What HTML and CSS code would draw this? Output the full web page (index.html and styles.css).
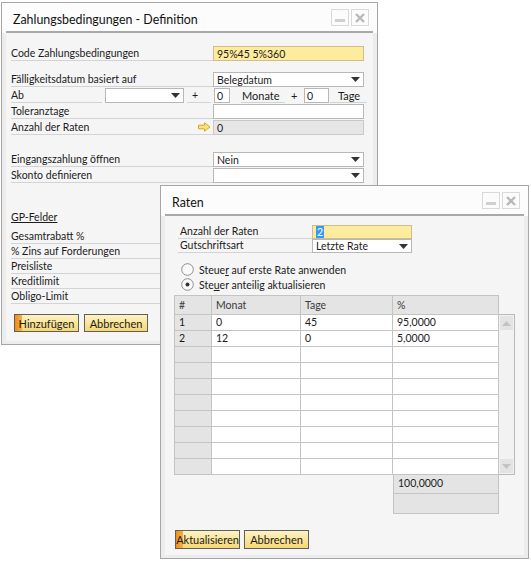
FILE: index.html
```html
<!DOCTYPE html>
<html lang="de">
<head>
  <meta charset="utf-8">
  <title>Zahlungsbedingungen - Definition</title>
  <link rel="stylesheet" href="styles.css">
</head>
<body>
  <!-- main form -->
  <div class="window win-terms">
    <div class="win-title">
      <div class="title-bar">
        <span class="title-text">Zahlungsbedingungen - Definition</span>
        <div class="win-buttons">
          <span class="win-btn"><span class="min-bar"></span></span>
          <span class="win-btn">
            <svg width="10" height="10" viewBox="0 0 10 10"><path d="M1 1L9 9M9 1L1 9" stroke="#b9b9b9" stroke-width="2.4"/></svg>
          </span>
        </div>
      </div>
    </div>
    <div class="win-body">
      <div class="row r-code">
        <span class="lbl">Code Zahlungsbedingungen</span>
        <div class="field field-key">95%45 5%360</div>
      </div>
      <div class="row r-due">
        <span class="lbl">Fälligkeitsdatum basiert auf</span>
        <div class="field">Belegdatum<svg class="caret" width="9" height="5" viewBox="0 0 9 5"><path d="M0 0h9L4.5 5z" fill="#333"/></svg></div>
      </div>
      <div class="row r-from">
        <span class="lbl lbl-ab">Ab</span>
        <div class="field field-ab"><svg class="caret" width="9" height="5" viewBox="0 0 9 5"><path d="M0 0h9L4.5 5z" fill="#333"/></svg></div>
        <span class="lbl lbl-plus">+</span>
        <div class="field field-num">0</div>
        <span class="lbl lbl-months">Monate</span>
        <span class="plain-plus">+</span>
        <div class="field field-num2">0</div>
        <span class="lbl lbl-days">Tage</span>
      </div>
      <div class="row r-next">
        <span class="lbl">Toleranztage</span>
        <div class="field"></div>
      </div>
      <div class="row r-next">
        <span class="lbl lbl-arrow">Anzahl der Raten
          <svg width="13" height="10" viewBox="0 0 13 10"><path d="M0.5 3.2H6.5V0.8L12 5L6.5 9.2V6.8H0.5Z" fill="#f9e37c" stroke="#d8a52a" stroke-width="1"/></svg>
        </span>
        <div class="field field-ro">0</div>
      </div>
      <div class="row r-open">
        <span class="lbl">Eingangszahlung öffnen</span>
        <div class="field">Nein<svg class="caret" width="9" height="5" viewBox="0 0 9 5"><path d="M0 0h9L4.5 5z" fill="#333"/></svg></div>
      </div>
      <div class="row r-next">
        <span class="lbl">Skonto definieren</span>
        <div class="field"><svg class="caret" width="9" height="5" viewBox="0 0 9 5"><path d="M0 0h9L4.5 5z" fill="#333"/></svg></div>
      </div>

      <div class="gp-title">GP-Felder</div>
      <div class="gp-list">
        <span class="lbl gp-row">Gesamtrabatt %</span>
        <span class="lbl gp-row">% Zins auf Forderungen</span>
        <span class="lbl gp-row">Preisliste</span>
        <span class="lbl gp-row">Kreditlimit</span>
        <span class="lbl gp-row">Obligo-Limit</span>
      </div>

      <div class="actions actions-terms">
        <button class="btn btn-focus">Hinzufügen</button>
        <button class="btn btn-narrow">Abbrechen</button>
      </div>
    </div>
  </div>

  <!-- installments dialog -->
  <div class="window win-rates">
    <div class="win-title">
      <div class="title-bar">
        <span class="title-text">Raten</span>
        <div class="win-buttons">
          <span class="win-btn"><span class="min-bar"></span></span>
          <span class="win-btn">
            <svg width="10" height="10" viewBox="0 0 10 10"><path d="M1 1L9 9M9 1L1 9" stroke="#b9b9b9" stroke-width="2.4"/></svg>
          </span>
        </div>
      </div>
    </div>
    <div class="win-body rates-body">
      <div class="rates-form">
        <div class="row2">
          <span class="lbl lbl2">Anzahl der Raten</span>
          <div class="field field2 field-key"><span class="sel">2</span></div>
        </div>
        <div class="row2">
          <span class="lbl lbl2">Gutschriftsart</span>
          <div class="field field2">Letzte Rate<svg class="caret" width="9" height="5" viewBox="0 0 9 5"><path d="M0 0h9L4.5 5z" fill="#333"/></svg></div>
        </div>
      </div>

      <div class="radios">
        <div class="radio">
          <svg width="13" height="13" viewBox="0 0 13 13"><circle cx="6.5" cy="6.5" r="5.8" fill="#fbfbfb" stroke="#8e8e8e"/></svg>
          <span>Steue<u>r</u> auf erste Rate anwenden</span>
        </div>
        <div class="radio">
          <svg width="13" height="13" viewBox="0 0 13 13"><circle cx="6.5" cy="6.5" r="5.8" fill="#fbfbfb" stroke="#8e8e8e"/><circle cx="6.5" cy="6.5" r="2" fill="#333"/></svg>
          <span>Ste<u>u</u>er anteilig aktualisieren</span>
        </div>
      </div>

      <div class="grid-wrap">
        <div class="grid">
          <div class="hd">#</div><div class="hd">Monat</div><div class="hd">Tage</div><div class="hd">%</div>
          <div class="num">1</div><div>0</div><div>45</div><div>95,0000</div>
          <div class="num">2</div><div>12</div><div>0</div><div>5,0000</div>
          <div class="num"></div><div></div><div></div><div></div>
          <div class="num"></div><div></div><div></div><div></div>
          <div class="num"></div><div></div><div></div><div></div>
          <div class="num"></div><div></div><div></div><div></div>
          <div class="num"></div><div></div><div></div><div></div>
          <div class="num"></div><div></div><div></div><div></div>
          <div class="num"></div><div></div><div></div><div></div>
          <div class="num"></div><div></div><div></div><div></div>
        </div>
        <div class="scrollbar">
          <span class="sb-btn"><svg width="9" height="5" viewBox="0 0 9 5"><path d="M0 5h9L4.5 0z" fill="#c3c3c3"/></svg></span>
          <span class="sb-btn"><svg width="9" height="5" viewBox="0 0 9 5"><path d="M0 0h9L4.5 5z" fill="#c3c3c3"/></svg></span>
        </div>
      </div>
      <div class="totals">
        <div class="tot">100,0000</div>
        <div class="tot tot-empty"></div>
      </div>

      <div class="actions actions-rates">
        <button class="btn btn-focus btn-tall">Aktualisieren</button>
        <button class="btn btn-tall">Abbrechen</button>
      </div>
    </div>
  </div>
</body>
</html>
```

FILE: styles.css
```css
body {
  margin: 0;
  width: 531px;
  height: 564px;
  position: relative;
  overflow: hidden;
  background: #fff;
  font-family: "Lato", "Noto Sans", sans-serif;
  font-size: 10.5px;
  color: #1b1b1b;
}

.window {
  position: absolute;
  box-sizing: border-box;
  border: 1px solid #a6a6a6;
  background: #ececec;
  display: flex;
  flex-direction: column;
}

.win-terms {
  left: 1px;
  top: 2px;
  width: 377px;
  height: 343px;
}

.win-rates {
  left: 160px;
  top: 185px;
  width: 369px;
  height: 374px;
}

.win-title {
  background: #fcfcfc;
  padding: 0 4px;
}

.title-bar {
  box-sizing: border-box;
  height: 30px;
  padding: 4px 4px 0 7px;
  border-bottom: 2px solid #a9a9a9;
  display: flex;
  align-items: center;
  justify-content: space-between;
}

.title-text {
  font-size: 12.4px;
  color: #111;
}

.win-buttons {
  align-self: flex-start;
  margin-top: 2px;
  display: flex;
  gap: 2px;
}

.win-btn {
  box-sizing: border-box;
  width: 18px;
  height: 17px;
  border: 1px solid #d9d9d9;
  background: #fbfbfb;
  display: flex;
  align-items: center;
  justify-content: center;
  position: relative;
}

.min-bar {
  position: absolute;
  left: 3px;
  bottom: 3px;
  width: 10px;
  height: 3px;
  background: #d0d0d0;
}

.win-body {
  flex: 1;
  margin: 0 4px 3px;
  background: #f5f5f5;
  padding-left: 5px;
}

/* form rows */
.row {
  display: flex;
  height: 15px;
  margin-top: 1px;
}

.r-code { margin-top: 13px; }
.r-due { margin-top: 11px; }
.r-open { margin-top: 17px; }

.lbl {
  box-sizing: border-box;
  width: 202px;
  height: 15px;
  line-height: 13px;
  border-bottom: 1px solid #d3d3d3;
  white-space: nowrap;
  display: flex;
  align-items: center;
  justify-content: space-between;
}

.lbl-arrow {
  padding-right: 2px;
}

.field {
  box-sizing: border-box;
  width: 151px;
  height: 15px;
  border: 1px solid #b7b7b7;
  background: #fff;
  padding: 0 3px;
  display: flex;
  align-items: center;
  justify-content: space-between;
  white-space: nowrap;
}

.caret {
  margin-left: auto;
}

.field-key {
  background: #feec9e;
  border-color: #cdbf8a;
}

.field-ro {
  background: #e6e6e6;
  border-color: #c9c9c9;
}

/* "Ab ... + 0 Monate + 0 Tage" row */
.lbl-ab { width: 91px; }

.field-ab {
  width: 79px;
  margin-left: 3px;
}

.lbl-plus {
  width: 24px;
  margin-left: 3px;
  padding-left: 5px;
}

.field-num {
  width: 16px;
  margin-left: 3px;
  padding: 0 2px;
}

.lbl-months {
  width: 44px;
  margin-left: 11px;
  padding-left: 1px;
  font-size: 11px;
}

.plain-plus {
  width: 19px;
  padding-left: 6px;
  box-sizing: border-box;
  line-height: 15px;
  font-size: 11px;
}

.field-num2 {
  width: 25px;
  padding: 0 2px;
}

.lbl-days {
  width: 37px;
  margin-left: 1px;
  padding-left: 8px;
  font-size: 11px;
}

/* GP fields */
.gp-title {
  margin-top: 27px;
  height: 14px;
  line-height: 14px;
  text-decoration: underline;
}

.gp-list {
  margin-top: 5px;
  display: flex;
  flex-direction: column;
}

.gp-row {
  width: 360px;
}

.actions {
  display: flex;
}

.actions-terms {
  margin-top: 10px;
  margin-left: 3px;
  gap: 5px;
}

.btn {
  box-sizing: border-box;
  width: 65px;
  height: 18px;
  padding: 0;
  border: 1px solid #5f5f5f;
  background: linear-gradient(#fdf3c4, #f6d772);
  font: inherit;
  font-size: 11px;
  color: #1b1b1b;
  text-align: center;
}

.btn-narrow { width: 64px; }

.btn-focus {
  background: linear-gradient(to right, #ef8e12, #f6b04a 7px, transparent 7px), linear-gradient(#fdf3c4, #f6d772);
}

.btn-tall { height: 19px; }

/* Raten dialog */
.rates-body {
  padding-left: 0;
}

.rates-form {
  padding: 9px 0 0 13px;
}

.row2 {
  display: flex;
  height: 14px;
}

.lbl2 {
  width: 134px;
  height: 14px;
  padding-left: 2px;
}

.field2 {
  width: 100px;
  height: 14px;
}

.sel {
  background: #3399ff;
  color: #fff;
  padding: 0 1px;
  line-height: 12px;
}

.radios {
  margin: 9px 0 0 16px;
}

.radio {
  height: 15px;
  display: flex;
  align-items: center;
  gap: 5px;
}

.grid-wrap {
  margin: 3px 0 0 9px;
  display: flex;
  align-items: flex-start;
}

.grid {
  display: grid;
  grid-template-columns: 37px 89px 92px 106px;
  grid-template-rows: 19px;
  grid-auto-rows: 16px;
  border-left: 1px solid #c4c4c4;
  border-top: 1px solid #c4c4c4;
}

.grid > div {
  box-sizing: border-box;
  border-right: 1px solid #c4c4c4;
  border-bottom: 1px solid #c4c4c4;
  background: #fff;
  padding-left: 4px;
  line-height: 15px;
  white-space: nowrap;
}

.grid > .hd {
  background: #e4e4e4;
  color: #3a3a3a;
  line-height: 18px;
}

.grid > .num {
  background: #e4e4e4;
}

.scrollbar {
  box-sizing: border-box;
  width: 16px;
  height: 161px;
  margin-top: 19px;
  border: 1px solid #b9b9b9;
  border-left: none;
  background: #f2f2f2;
  padding: 1px;
  display: flex;
  flex-direction: column;
  justify-content: space-between;
}

.sb-btn {
  height: 14px;
  background: #e3e3e3;
  display: flex;
  align-items: center;
  justify-content: center;
}

.totals {
  margin-left: 228px;
  width: 106px;
}

.tot {
  box-sizing: border-box;
  height: 19px;
  border: 1px solid #c4c4c4;
  border-top: none;
  background: #e4e4e4;
  padding-left: 4px;
  line-height: 17px;
}

.tot-empty { height: 20px; }

.actions-rates {
  margin: 16px 0 0 10px;
  gap: 4px;
}
```
